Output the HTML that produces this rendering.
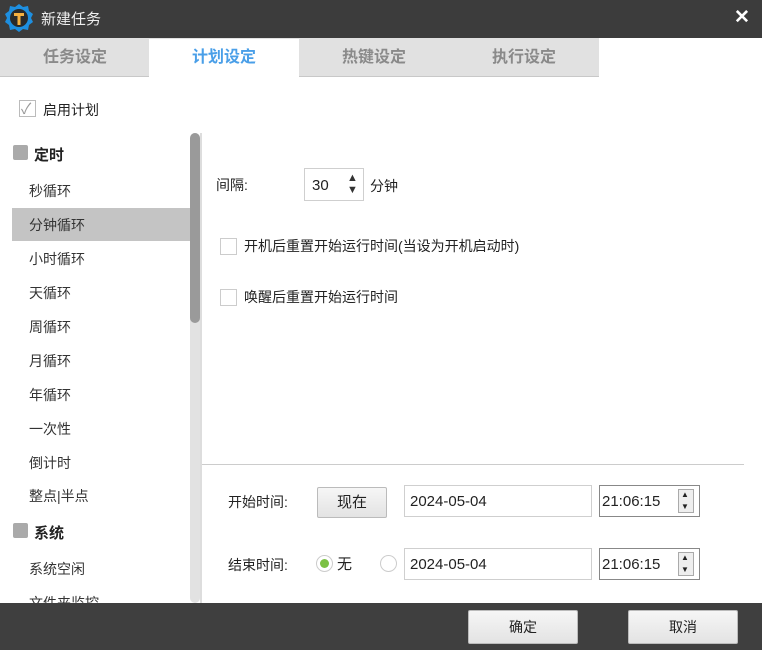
<!DOCTYPE html>
<html><head><meta charset="utf-8"><style>
*{margin:0;padding:0;box-sizing:border-box}
body{width:762px;height:650px;position:relative;overflow:hidden;background:#fff;font-family:"Liberation Sans","Noto Sans CJK SC",sans-serif;font-size:14px;color:#222}
.a{position:absolute}
.title{left:0;top:0;width:762px;height:38px;background:#3c3c3c}
.tabs{left:0;top:38px;width:599px;height:39px;background:#e1e1e1;border-bottom:1px solid #c8c8c8}
.tab{position:absolute;top:39px;height:38px;width:150px;text-align:center;line-height:38px;font-size:16px;font-weight:bold;color:#8a8a8a}
.item{position:absolute;left:29px;font-size:14px;color:#333}
.cb{position:absolute;width:17px;height:17px;border:1px solid #ccc;background:#fff}
.inp{position:absolute;border:1px solid #cfcfcf;background:#fff;height:32px;line-height:32px;padding-left:5px;font-size:15px}
.btn{position:absolute;border:1px solid #bbb;background:linear-gradient(#f6f6f6,#e3e3e3);text-align:center;border-radius:2px}
.spin{position:absolute;width:16px;height:24px;border:1px solid #aaa;background:#eee}
</style></head><body>
<div class="a title"></div>
<svg class="a" style="left:4px;top:3px" width="30" height="30" viewBox="0 0 30 30">
<polygon points="15,1 19,4 24,3 25,8 29,11 27,15 29,19 25,22 24,27 19,26 15,29 11,26 6,27 5,22 1,19 3,15 1,11 5,8 6,3 11,4" fill="#1e8fe0"/>
<circle cx="15" cy="15" r="9" fill="#2a2a2a"/>
<path d="M10 10h10v3h-3.5v9h-3v-9H10z" fill="#f5b040"/></svg>
<div class="a" style="left:41px;top:8px;color:#eee;font-size:15px">新建任务</div>
<div class="a" style="left:734px;top:6px;color:#fff;font-size:19px;font-weight:bold">✕</div>
<div class="a tabs"></div>
<div class="tab" style="left:0">任务设定</div>
<div class="tab" style="left:149px;background:#fff;color:#4a9fe8;height:39px">计划设定</div>
<div class="tab" style="left:299px">热键设定</div>
<div class="tab" style="left:449px">执行设定</div>
<div class="cb" style="left:19px;top:100px;border-color:#bbb"></div>
<div class="a" style="left:21px;top:98px;color:#999;font-size:15px">✓</div>
<div class="a" style="left:43px;top:100px">启用计划</div>
<div class="a" style="left:13px;top:145px;width:15px;height:15px;background:#aaa;border-radius:2px"></div>
<div class="a" style="left:34px;top:144px;font-weight:bold;font-size:15px">定时</div>
<div class="item" style="top:181px">秒循环</div>
<div class="a" style="left:12px;top:208px;width:178px;height:33px;background:#c4c4c4"></div>
<div class="item" style="top:215px">分钟循环</div>
<div class="item" style="top:249px">小时循环</div>
<div class="item" style="top:283px">天循环</div>
<div class="item" style="top:317px">周循环</div>
<div class="item" style="top:351px">月循环</div>
<div class="item" style="top:385px">年循环</div>
<div class="item" style="top:419px">一次性</div>
<div class="item" style="top:453px">倒计时</div>
<div class="item" style="top:486px">整点|半点</div>
<div class="a" style="left:13px;top:523px;width:15px;height:15px;background:#aaa;border-radius:2px"></div>
<div class="a" style="left:34px;top:522px;font-weight:bold;font-size:15px">系统</div>
<div class="item" style="top:559px">系统空闲</div>
<div class="item" style="top:593px;height:10px;overflow:hidden">文件夹监控</div>
<div class="a" style="left:190px;top:133px;width:10px;height:470px;background:#e2e2e2;border-radius:5px"></div>
<div class="a" style="left:190px;top:133px;width:10px;height:190px;background:#9a9a9a;border-radius:5px"></div>
<div class="a" style="left:200px;top:133px;width:2px;height:470px;background:#ddd"></div>
<div class="a" style="left:202px;top:464px;width:542px;height:1px;background:#ccc"></div>
<div class="a" style="left:216px;top:175px">间隔:</div>
<div class="inp" style="left:304px;top:168px;width:60px;height:33px;line-height:33px;padding-left:7px">30</div>
<div class="a" style="left:347px;top:172px;font-size:11px;color:#333;line-height:12px">▲<br>▼</div>
<div class="a" style="left:370px;top:176px">分钟</div>
<div class="cb" style="left:220px;top:238px"></div>
<div class="a" style="left:244px;top:236px">开机后重置开始运行时间(当设为开机启动时)</div>
<div class="cb" style="left:220px;top:289px"></div>
<div class="a" style="left:244px;top:287px">唤醒后重置开始运行时间</div>
<div class="a" style="left:228px;top:492px">开始时间:</div>
<div class="btn" style="left:317px;top:487px;width:70px;height:31px;line-height:29px;font-size:15px">现在</div>
<div class="inp" style="left:404px;top:485px;width:188px">2024-05-04</div>
<div class="inp" style="left:599px;top:485px;width:101px;border-color:#888;padding-left:2px">21:06:15</div>
<div class="spin" style="left:678px;top:489px"></div>
<div class="a" style="left:681px;top:489px;font-size:8px;line-height:12px">▲<br>▼</div>
<div class="a" style="left:228px;top:555px">结束时间:</div>
<div class="a" style="left:316px;top:555px;width:17px;height:17px;border-radius:50%;border:1px solid #ccc;background:#fff"></div>
<div class="a" style="left:320px;top:559px;width:9px;height:9px;border-radius:50%;background:#7cc144"></div>
<div class="a" style="left:337px;top:553px;font-size:15px">无</div>
<div class="a" style="left:380px;top:555px;width:17px;height:17px;border-radius:50%;border:1px solid #ccc"></div>
<div class="inp" style="left:404px;top:548px;width:188px">2024-05-04</div>
<div class="inp" style="left:599px;top:548px;width:101px;border-color:#888;padding-left:2px">21:06:15</div>
<div class="spin" style="left:678px;top:552px"></div>
<div class="a" style="left:681px;top:552px;font-size:8px;line-height:12px">▲<br>▼</div>
<div class="a" style="left:0;top:603px;width:762px;height:47px;background:#3f3f3f"></div>
<div class="btn" style="left:468px;top:610px;width:110px;height:34px;line-height:32px">确定</div>
<div class="btn" style="left:628px;top:610px;width:110px;height:34px;line-height:32px">取消</div>
</body></html>
